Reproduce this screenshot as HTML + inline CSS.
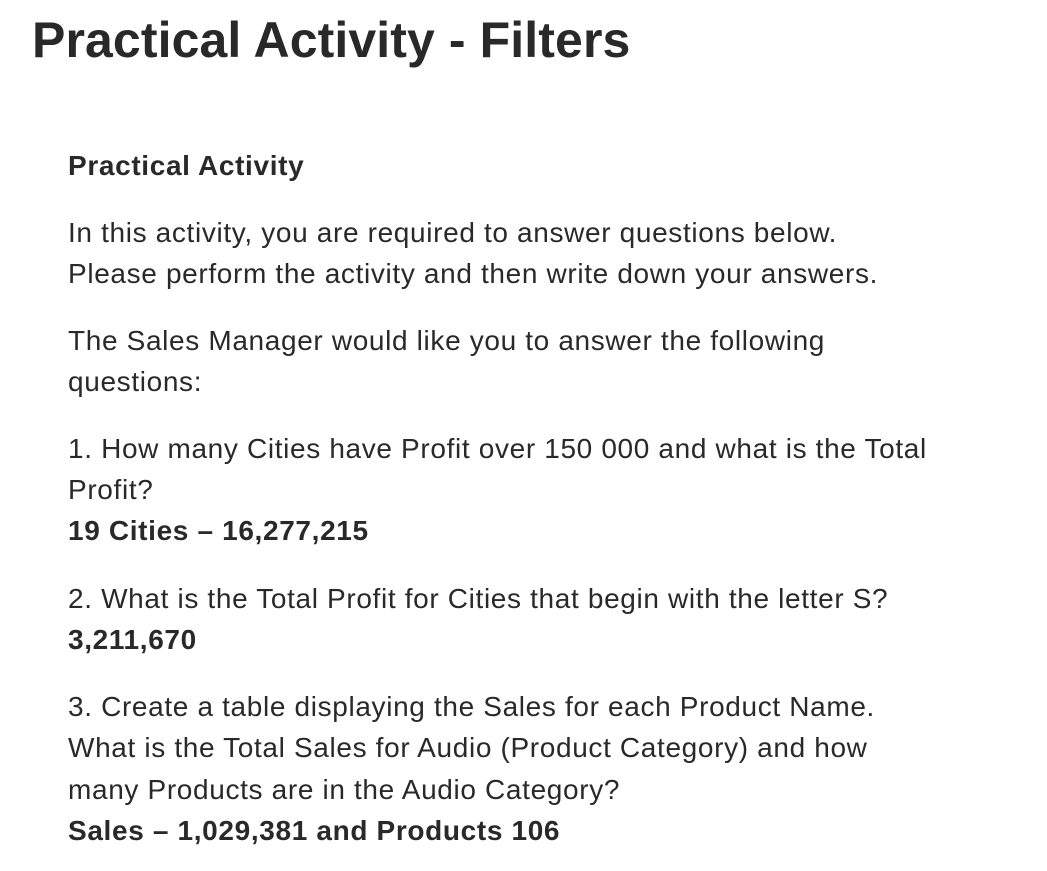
<!DOCTYPE html>
<html><head><meta charset="utf-8"><style>
body{margin:0;background:#fff;width:1047px;height:871px;position:relative;overflow:hidden;font-family:"Liberation Sans",sans-serif;color:#292929}
.l{position:absolute;left:68px;font-size:28px;letter-spacing:0.65px;white-space:nowrap;line-height:30px}
.b{font-weight:bold}
h1{position:absolute;left:32px;top:12px;margin:0;font-size:50px;line-height:56px;font-weight:bold;letter-spacing:0.1px;white-space:nowrap}
</style></head><body>
<h1>Practical Activity - Filters</h1>
<div class="l b" style="top:151px">Practical Activity</div>
<div class="l" style="top:218px">In this activity, you are required to answer questions below.</div>
<div class="l" style="top:259px">Please perform the activity and then write down your answers.</div>
<div class="l" style="top:326px">The Sales Manager would like you to answer the following</div>
<div class="l" style="top:367px">questions:</div>
<div class="l" style="top:434px">1. How many Cities have Profit over 150 000 and what is the Total</div>
<div class="l" style="top:475px">Profit?</div>
<div class="l b" style="top:516px">19 Cities – 16,277,215</div>
<div class="l" style="top:584px">2. What is the Total Profit for Cities that begin with the letter S?</div>
<div class="l b" style="top:625px">3,211,670</div>
<div class="l" style="top:692px">3. Create a table displaying the Sales for each Product Name.</div>
<div class="l" style="top:733px">What is the Total Sales for Audio (Product Category) and how</div>
<div class="l" style="top:775px">many Products are in the Audio Category?</div>
<div class="l b" style="top:816px">Sales – 1,029,381 and Products 106</div>
</body></html>
